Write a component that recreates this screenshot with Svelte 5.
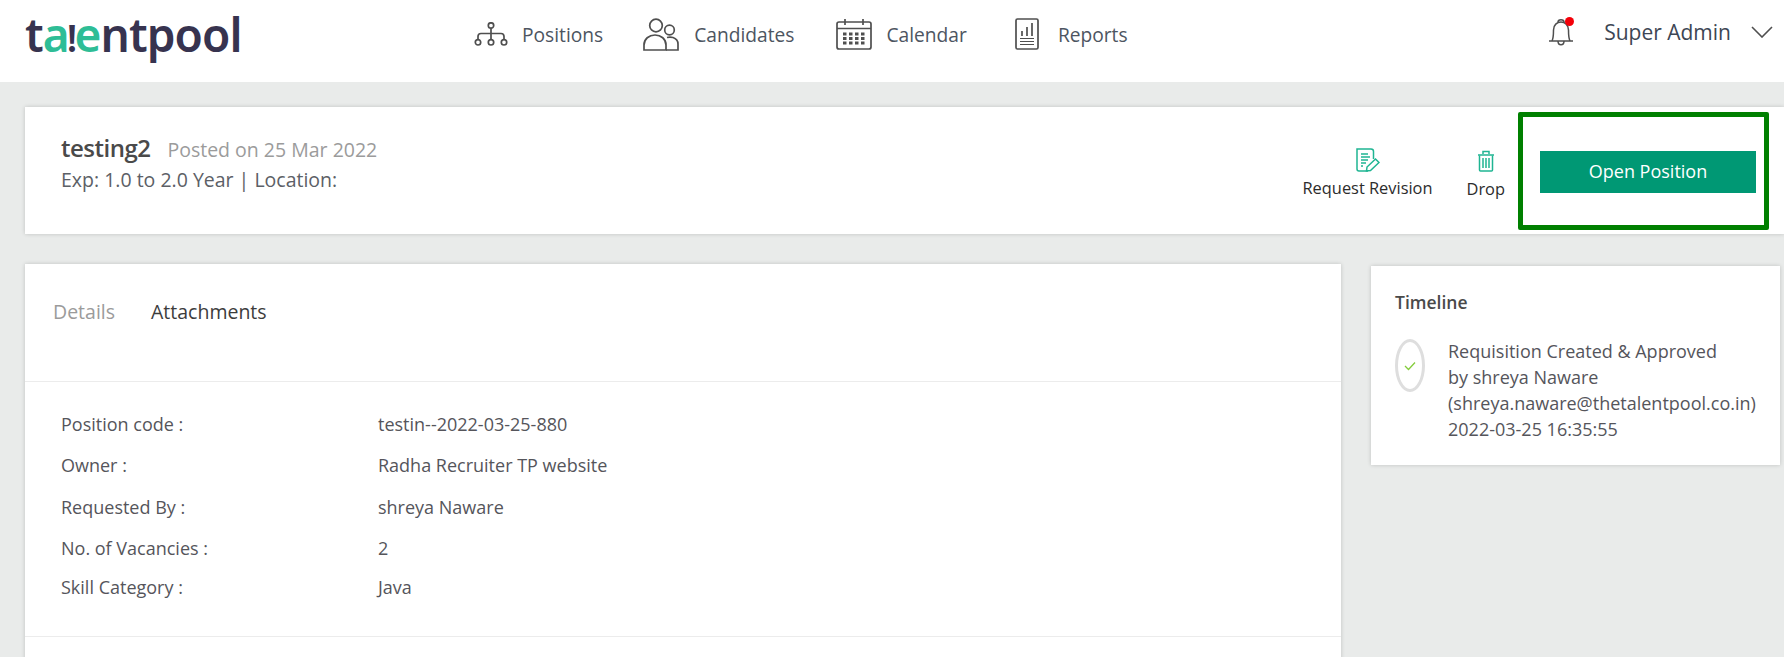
<script lang="ts">
  const nav = [
    { label: 'Positions', icon: 'tree' },
    { label: 'Candidates', icon: 'people' },
    { label: 'Calendar', icon: 'calendar' },
    { label: 'Reports', icon: 'report' }
  ];
  const details = [
    { key: 'Position code :', value: 'testin--2022-03-25-880', h: 38 },
    { key: 'Owner :', value: 'Radha Recruiter TP website', h: 44 },
    { key: 'Requested By :', value: 'shreya Naware', h: 39 },
    { key: 'No. of Vacancies :', value: '2', h: 44 },
    { key: 'Skill Category :', value: 'Java', h: 33 }
  ];
</script>

<div class="page">
  <header class="topbar">
    <div class="logo">t<span class="mint">a</span><span class="bang">!</span><span class="mint">e</span>ntpool</div>
    <nav class="nav">
      {#each nav as item}
        <div class="nav-item {item.icon}">
          {#if item.icon === 'tree'}
            <svg width="34" height="24" viewBox="0 0 34 24" fill="none" stroke="#4f4f4f" stroke-width="1.7">
              <circle cx="17" cy="3.5" r="2.7" />
              <path d="M17 6.2V17.6M4 17.6V14.5C4 12.5 5 11.5 7 11.5H27C29 11.5 30 12.5 30 14.5V17.6" />
              <circle cx="4" cy="20.3" r="2.7" />
              <circle cx="17" cy="20.3" r="2.7" />
              <circle cx="30" cy="20.3" r="2.7" />
            </svg>
          {:else if item.icon === 'people'}
            <svg width="36" height="33" viewBox="0 0 36 33" fill="none" stroke="#4f4f4f" stroke-width="1.7">
              <circle cx="13" cy="7.5" r="6.3" />
              <circle cx="26.5" cy="12" r="4.8" />
              <path d="M1 32V27C1 21 6 17 12 17C18 17 23 21 23 27V32Z" />
              <path d="M24 19.5C26 19 28 19 30 19.5C33 20.5 35 23 35 26V32H23" />
            </svg>
          {:else if item.icon === 'calendar'}
            <svg width="36" height="32" viewBox="0 0 36 32" fill="none" stroke="#4f4f4f" stroke-width="1.7">
              <rect x="1" y="4" width="34" height="27" rx="2" />
              <path d="M1 10.5H35" />
              <path d="M9 1V7M27 1V7" />
              <path d="M7 16h3.5M13 16h3.5M19 16h3.5M25 16h3.5M7 20.5h3.5M13 20.5h3.5M19 20.5h3.5M25 20.5h3.5M7 25h3.5M13 25h3.5M19 25h3.5M25 25h3.5" stroke-width="3" />
            </svg>
          {:else}
            <svg width="24" height="32" viewBox="0 0 24 32" fill="none" stroke="#4f4f4f" stroke-width="1.7">
              <rect x="1" y="1" width="22" height="30" rx="1.5" />
              <path d="M7 18V13M12 18V9M17 18V5" />
              <path d="M5 20.5H19M5 23.5H19M5 26.5H19" stroke-width="1.2" />
            </svg>
          {/if}
          <span>{item.label}</span>
        </div>
      {/each}
    </nav>
    <div class="user">
      <div class="bell">
        <svg width="26" height="30" viewBox="0 0 26 30" fill="none" stroke="#4f4f4f" stroke-width="1.5">
          <path d="M10 5C10 2 16 2 16 5" />
          <path d="M1 24H25M4 24C5.5 21 5.5 18 5.5 13C5.5 8 9 5 13 5C17 5 20.5 8 20.5 13C20.5 18 20.5 21 22 24" />
          <path d="M10 24C10 29 16 29 16 24" />
        </svg>
        <span class="dot"></span>
      </div>
      <span class="user-name">Super Admin</span>
      <svg width="22" height="12" viewBox="0 0 22 12" fill="none" stroke="#4f4f4f" stroke-width="1.6">
        <path d="M1 1L11 11L21 1" />
      </svg>
    </div>
  </header>

  <section class="summary card">
    <div>
      <div class="title-row">
        <span class="title">testing2</span>
        <span class="posted">Posted on 25 Mar 2022</span>
      </div>
      <div class="meta">Exp: 1.0 to 2.0 Year | Location:</div>
    </div>
    <div class="actions">
      <div class="action revise">
        <svg width="24" height="24" viewBox="0 0 24 24" fill="none" stroke="#1fb592" stroke-width="1.5">
          <path d="M12 23H3C1.8 23 1 22.2 1 21V1H15C16.5 1 17.5 2 17.5 3.5V11" />
          <path d="M5 6H12M5 9H14M5 12H12M5 15H10M5 18H7" />
          <path d="M10.5 23L11 19L19.5 11L23 14.5L14.5 22.5Z" />
        </svg>
        <span>Request Revision</span>
      </div>
      <div class="action drop">
        <svg width="18" height="22" viewBox="0 0 18 22" fill="none" stroke="#1fb592" stroke-width="1.5">
          <path d="M1 5H17M6 4V1.5H12V4" />
          <path d="M2.5 5.5V20C2.5 20.6 3 21 3.5 21H14.5C15 21 15.5 20.6 15.5 20V5.5" />
          <path d="M6 8V18M9 8V18M12 8V18" />
        </svg>
        <span>Drop</span>
      </div>
      <div class="open-btn">Open Position</div>
    </div>
    <div class="highlight"></div>
  </section>

  <div class="columns">
    <main class="detail card">
      <div class="tabs">
        <span class="tab muted">Details</span>
        <span class="tab">Attachments</span>
      </div>
      <div class="rows">
        {#each details as row}
          <div class="row" style="height: {row.h}px">
            <span class="key">{row.key}</span>
            <span class="value">{row.value}</span>
          </div>
        {/each}
      </div>
    </main>
    <aside class="timeline card">
      <h4>Timeline</h4>
      <div class="event">
        <div class="ring">
          <svg width="12" height="10" viewBox="0 0 12 10" fill="none" stroke="#84cc3c" stroke-width="1.3">
            <path d="M1 5L4.5 8.5L11 1.5" />
          </svg>
        </div>
        <div class="event-text">
          Requisition Created &amp; Approved<br />
          by shreya Naware<br />
          (shreya.naware@thetalentpool.co.in)<br />
          2022-03-25 16:35:55
        </div>
      </div>
    </aside>
  </div>
</div>

<style>
  :global(body) {
    margin: 0;
    background: #e9ebea;
    overflow: hidden;
  }

  .page {
    height: 657px;
    overflow: hidden;
    font-family: 'Open Sans', sans-serif;
    color: #4a4a4a;
  }

  .card {
    background: #fff;
    box-shadow: 0 0 4px rgba(0, 0, 0, 0.18);
  }

  .topbar {
    display: flex;
    align-items: center;
    height: 82px;
    background: #fff;
    padding-left: 25px;
  }

  .logo {
    width: 449px;
    margin-top: -14px;
    font-family: 'Noto Sans', sans-serif;
    font-size: 46px;
    font-weight: 600;
    letter-spacing: -0.9px;
    color: #37334f;
  }

  .mint {
    color: #2ebd96;
  }

  .bang {
    margin: 0 -2px;
    font-size: 38px;
    color: #37334f;
  }

  .nav {
    display: flex;
    align-items: center;
    margin-top: -14px;
    font-size: 19.2px;
    color: #4d5561;
  }

  .nav-item {
    display: flex;
    align-items: center;
    gap: 14px;
  }

  .tree {
    margin-right: 40px;
  }

  .people {
    gap: 15px;
    margin-right: 42px;
  }

  .calendar {
    margin-right: 48px;
  }

  .report {
    gap: 19px;
  }

  .user {
    display: flex;
    align-items: center;
    margin-left: auto;
    margin-top: -18px;
    padding-right: 11px;
  }

  .bell {
    position: relative;
    display: flex;
    margin-right: 30px;
  }

  .dot {
    position: absolute;
    top: 0;
    right: 0;
    width: 9px;
    height: 9px;
    border-radius: 50%;
    background: #f40009;
  }

  .user-name {
    font-size: 21px;
    color: #3d4654;
    margin-right: 20px;
  }

  .summary {
    position: relative;
    display: flex;
    justify-content: space-between;
    height: 127px;
    margin: 25px 0 0 25px;
    box-sizing: border-box;
    padding: 25px 28px 0 36px;
  }

  .title-row {
    display: flex;
    align-items: baseline;
    gap: 17px;
    line-height: 32px;
  }

  .title {
    font-size: 24px;
    font-weight: 600;
    letter-spacing: -0.5px;
    color: #4a4a4a;
  }

  .posted {
    font-size: 19.5px;
    color: #9b9b9b;
  }

  .meta {
    font-size: 19.5px;
    line-height: 27px;
    color: #5c6066;
  }

  .actions {
    display: flex;
    align-items: flex-start;
  }

  .action {
    display: flex;
    flex-direction: column;
    align-items: center;
    font-size: 16.4px;
    color: #2c2c2c;
  }

  .revise {
    margin-top: 16px;
    gap: 4px;
  }

  .drop {
    margin: 18px 0 0 34px;
    gap: 5px;
  }

  .open-btn {
    width: 216px;
    height: 42px;
    margin: 19px 0 0 35px;
    background: #009874;
    color: #fff;
    font-size: 18px;
    line-height: 40px;
    text-align: center;
  }

  .highlight {
    position: absolute;
    left: 1493px;
    top: 5px;
    width: 241px;
    height: 108px;
    border: 5px solid #008000;
    border-radius: 2px;
  }

  .columns {
    display: flex;
    align-items: flex-start;
    gap: 30px;
    margin: 30px 4px 0 25px;
  }

  .detail {
    width: 1316px;
    height: 420px;
    flex: none;
  }

  .tabs {
    display: flex;
    gap: 36px;
    height: 118px;
    box-sizing: border-box;
    padding: 34px 0 0 28px;
    border-bottom: 1px solid #ececec;
    font-size: 19.5px;
    color: #3c3c3c;
  }

  .muted {
    color: #9b9b9b;
  }

  .rows {
    padding-top: 23px;
    padding-bottom: 33px;
    border-bottom: 1px solid #ececec;
  }

  .row {
    display: flex;
    align-items: center;
    box-sizing: border-box;
    padding-left: 36px;
    font-size: 18px;
    color: #55555b;
  }

  .key {
    width: 317px;
  }

  .timeline {
    flex: 1;
    height: 199px;
    margin-top: 2px;
    box-sizing: border-box;
    padding: 24px 0 0 24px;
  }

  h4 {
    margin: 0 0 24px;
    font-size: 17.5px;
    line-height: 24px;
    font-weight: 600;
    color: #4a4a4a;
  }

  .event {
    display: flex;
    gap: 23px;
  }

  .ring {
    display: flex;
    align-items: center;
    justify-content: center;
    width: 30px;
    height: 53px;
    box-sizing: border-box;
    margin-top: 1px;
    border: 3px solid #dedede;
    border-radius: 50%;
  }

  .event-text {
    font-size: 18px;
    line-height: 26px;
    color: #55555b;
    white-space: nowrap;
  }
</style>
